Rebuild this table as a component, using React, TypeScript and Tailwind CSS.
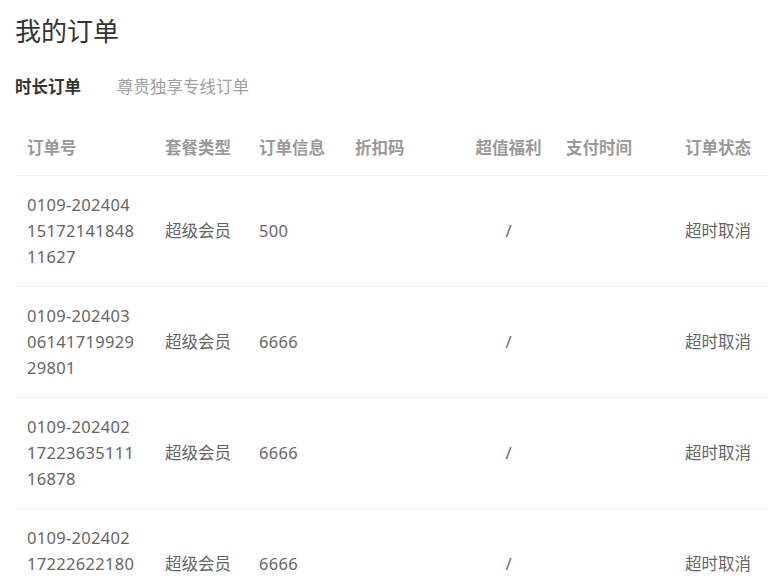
const font = { fontFamily: '"Noto Sans", "Noto Sans CJK SC", sans-serif' };

type Order = {
  no: string[];
  type: string;
  info: string;
  code: string;
  bonus: string;
  time: string;
  status: string;
};

const orders: Order[] = [
  {
    no: ["0109-202404", "15172141848", "11627"],
    type: "超级会员",
    info: "500",
    code: "",
    bonus: "/",
    time: "",
    status: "超时取消",
  },
  {
    no: ["0109-202403", "06141719929", "29801"],
    type: "超级会员",
    info: "6666",
    code: "",
    bonus: "/",
    time: "",
    status: "超时取消",
  },
  {
    no: ["0109-202402", "17223635111", "16878"],
    type: "超级会员",
    info: "6666",
    code: "",
    bonus: "/",
    time: "",
    status: "超时取消",
  },
  {
    no: ["0109-202402", "17222622180", "12345"],
    type: "超级会员",
    info: "6666",
    code: "",
    bonus: "/",
    time: "",
    status: "超时取消",
  },
];

// widths of the 7 columns
const cols = "grid grid-cols-[138px_94px_96px_120px_91px_119px_95px]";

export default function App() {
  return (
    <div className="w-[768px] h-[576px] overflow-hidden bg-white pl-[15px]" style={font}>
      <h1 className="pt-[13px] text-[26px] leading-[36px] text-[#333]">我的订单</h1>

      <div className="mt-[26px] flex items-center gap-[36px] text-[16.5px] leading-[24px]">
        <span className="font-bold text-[#333]">时长订单</span>
        <span className="text-[#a0a0a0]">尊贵独享专线订单</span>
      </div>

      <div className="mt-[22px] w-[753px]">
        <div className={cols + " border-b border-[#f0f0f5] py-[14px] text-[16.5px] leading-[26px] font-semibold text-[#999]"}>
          <div className="pl-[12px]">订单号</div>
          <div className="pl-[12px]">套餐类型</div>
          <div className="pl-[12px]">订单信息</div>
          <div className="pl-[12px]">折扣码</div>
          <div className="text-center">超值福利</div>
          <div className="pl-[12px]">支付时间</div>
          <div className="pl-[12px]">订单状态</div>
        </div>

        {orders.map((o, i) => (
          <div
            key={i}
            className={cols + " items-center border-b border-[#f0f0f5] py-[16px] text-[16.5px] leading-[26px] text-[#666]"}
          >
            <div className="pl-[12px] tracking-[0.3px]">
              {o.no.map((l) => (
                <div key={l}>{l}</div>
              ))}
            </div>
            <div className="pl-[12px]">{o.type}</div>
            <div className="pl-[12px] tracking-[0.3px]">{o.info}</div>
            <div className="pl-[12px]">{o.code}</div>
            <div className="text-center">{o.bonus}</div>
            <div className="pl-[12px]">{o.time}</div>
            <div className="pl-[12px]">{o.status}</div>
          </div>
        ))}
      </div>
    </div>
  );
}
